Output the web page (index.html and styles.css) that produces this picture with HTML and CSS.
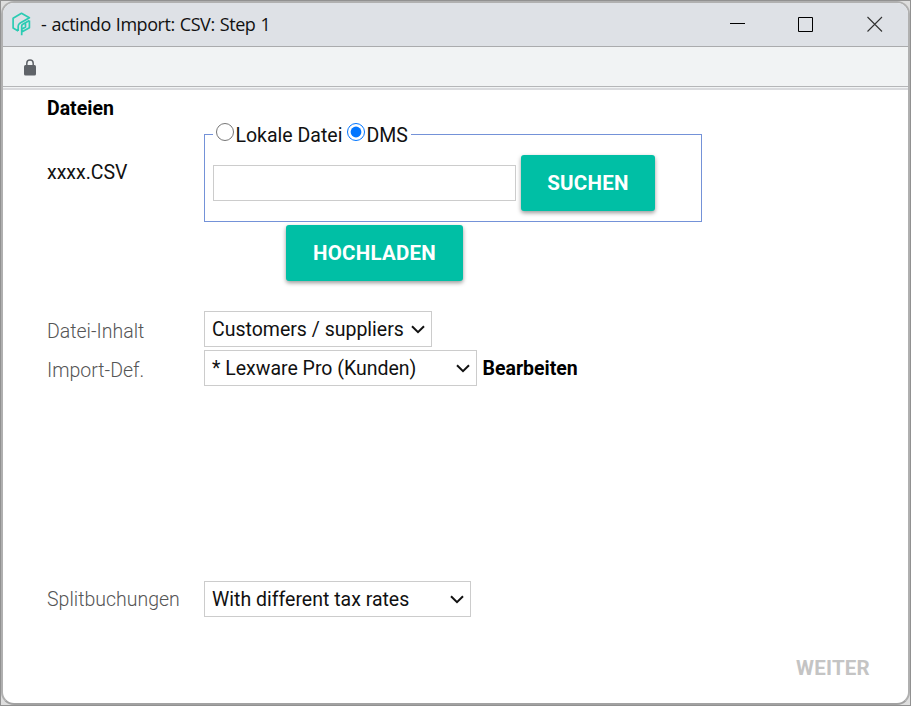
FILE: index.html
```html
<!DOCTYPE html>
<html lang="de">
<head>
<meta charset="utf-8">
<title>- actindo Import: CSV: Step 1</title>
<link rel="stylesheet" href="styles.css">
</head>
<body>
<div class="window">
  <header class="titlebar">
    <svg class="logo" width="20" height="24" viewBox="0 0 20 24" fill="none" stroke="#2bcbb3" stroke-width="1.7" stroke-linejoin="round">
      <path d="M6.2 19 1.1 16V6.2L9.5 1.3 17.4 5.8 8.2 11Q6.2 12.2 6.2 14V19"/>
      <path d="M17.4 8.6V15.7L9.7 20V23.2M9.7 20V14Q9.7 12.8 10.8 12.2L17.4 8.4M9.7 17.2 13.5 15V11.5"/>
    </svg>
    <span class="title">- actindo Import: CSV: Step 1</span>
    <div class="controls">
      <svg width="16" height="16" stroke="#000"><path d="M0 7.5H15"/></svg>
      <svg width="16" height="16" fill="none" stroke="#000"><path d="M.5 1.5H14.5V15.5H.5Z"/></svg>
      <svg width="16" height="16" stroke="#333" stroke-width="1.1"><path d="M.5 1 15 15.5M15 1 .5 15.5"/></svg>
    </div>
  </header>
  <div class="toolbar">
    <svg width="12" height="17" viewBox="0 0 12 17"><rect y="6" width="12" height="10.5" rx="1.5" fill="#5f6368"/><path d="M2.8 7V4.2a3.2 3.2 0 0 1 6.4 0V7" fill="none" stroke="#5f6368" stroke-width="1.5"/></svg>
  </div>
  <main class="content">
    <h1 class="heading">Dateien</h1>
    <section class="row upload">
      <span class="filename">xxxx.CSV</span>
      <div class="source">
        <fieldset>
          <legend><input type="radio" name="src"><label>Lokale Datei</label><input class="second" type="radio" name="src" checked><label>DMS</label></legend>
          <div class="search"><input class="field" type="text"><button class="btn search-btn">SUCHEN</button></div>
        </fieldset>
        <button class="btn upload-btn">HOCHLADEN</button>
      </div>
    </section>
    <section class="row">
      <span class="label">Datei-Inhalt</span>
      <div class="select contents"><span>Customers / suppliers</span><svg class="chevron" width="14" height="9"><path d="M1 1.2 7 7.2 13 1.2"/></svg></div>
    </section>
    <section class="row">
      <span class="label">Import-Def.</span>
      <div class="select definition"><span>* Lexware Pro (Kunden)</span><svg class="chevron" width="14" height="9"><path d="M1 1.2 7 7.2 13 1.2"/></svg></div>
      <b class="edit">Bearbeiten</b>
    </section>
    <section class="row split">
      <span class="label split-label">Splitbuchungen</span>
      <div class="select rates"><span>With different tax rates</span><svg class="chevron" width="14" height="9"><path d="M1 1.2 7 7.2 13 1.2"/></svg></div>
    </section>
    <div class="footer"><span>WEITER</span></div>
  </main>
</div>
</body>
</html>
```
FILE: styles.css
```css
* { box-sizing: border-box; }
body {
  margin: 0;
  width: 911px;
  height: 706px;
  border: 1px solid #919191;
  background: #dedede;
  font: 19.5px/24px Roboto, sans-serif;
  color: #111;
  overflow: hidden;
}
.window {
  height: 704px;
  border: 2px solid #b0b0b0;
  border-bottom-color: #a2a2a2;
  border-radius: 13px;
  background: #fff;
  overflow: hidden;
}
.titlebar {
  display: flex;
  height: 44px;
  padding: 0 25px 0 9px;
  background: #dee1e6;
  border-bottom: 1px solid #aaabad;
}
.logo { margin-top: 9px; }
.title {
  margin: 9px 0 0 9px;
  font: 18px/24px "Open Sans", sans-serif;
  letter-spacing: -0.44px;
  word-spacing: .8px;
  color: #111;
  white-space: nowrap;
}
.controls { display: flex; gap: 52.5px; margin: 13px 0 0 auto; }
.controls svg:nth-child(2) { margin: 0 .5px 0 -.5px; }
.toolbar {
  height: 43px;
  padding: 12px 21px;
  background: linear-gradient(#f1f3f4 39px, #b5b6b8 39px 40px, #f1f3f4 40px 41px, #d9dadd 41px);
}
.toolbar svg { display: block; }
.content { padding: 7px 38px 0 44px; }
.heading { margin: 0; font-size: 19.5px; line-height: 24px; font-weight: 700; color: #000; }
.row { display: grid; grid-template-columns: 157px auto 1fr; height: 39px; }
.upload { height: 190px; }
.filename { margin-top: 40px; }
.source { width: 498px; }
fieldset {
  height: 99px;
  margin: 2px 0 0;
  padding: 0 8px;
  border: 1px solid #7492d8;
  min-width: 0;
}
legend { display: flex; height: 22px; padding: 0 3px 0 2px; white-space: nowrap; }
legend input { width: 18px; height: 18px; margin: 0 1.5px 0 1px; }
legend .second { margin-left: 5px; }
legend label { line-height: 25px; }
legend label:last-child { margin-left: -.5px; }
.search { display: flex; align-items: center; gap: 5px; margin-top: 10px; }
.field { width: 303px; height: 36px; padding: 0 7px; border: 1px solid #ccc; font: inherit; }
.btn {
  height: 56px;
  padding: 0;
  border: 0;
  border-radius: 3px;
  background: #00bfa5;
  box-shadow: 0 2px 4px rgba(0,0,0,.4);
  color: #fff;
  font: 700 20.5px/56px Roboto, sans-serif;
  letter-spacing: .25px;
}
.search-btn { width: 134px; }
.upload-btn { display: block; width: 177px; margin: 3px 0 0 82px; }
.label { margin-top: 9px; font-weight: 300; color: #555; }
.select {
  display: flex;
  align-items: center;
  justify-content: space-between;
  height: 36px;
  padding: 0 6px 0 7px;
  border: 1px solid #ccc;
  background: #fff;
  white-space: nowrap;
}
.select span { padding-top: 2px; }
.contents { width: 228px; }
.definition { width: 273px; }
.rates { width: 267px; }
.chevron { fill: none; stroke: #111; stroke-width: 2; }
.edit { margin: 7px 0 0 5.5px; color: #000; font-weight: 700; }
.split { margin-top: 192px; }
.split-label { margin-top: 7px; }
.footer { margin-top: 36px; text-align: right; color: #c4c4c4; font-weight: 700; font-size: 20.5px; letter-spacing: .25px; }
```
